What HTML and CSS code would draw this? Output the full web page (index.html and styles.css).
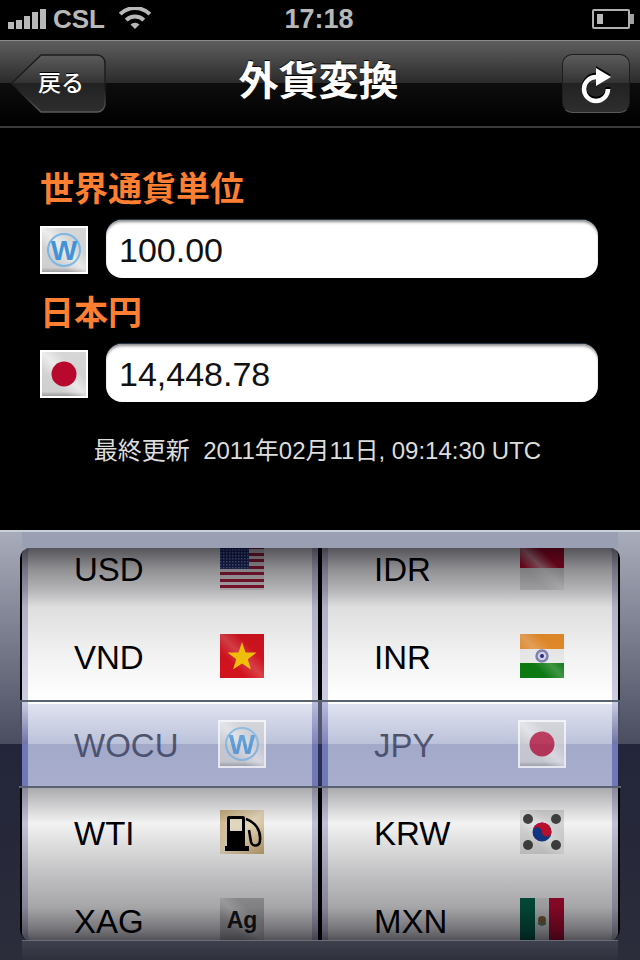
FILE: index.html
```html
<!DOCTYPE html>
<html lang="ja">

<head>
    <meta charset="UTF-8">
    <meta name="viewport" content="width=device-width, initial-scale=1.0">
    <title>外貨変換</title>
    <link rel="stylesheet" href="styles.css">
</head>

<body>
    <!-- flag icons, reused by the form and the picker -->
    <svg class="defs" aria-hidden="true">
        <defs>
            <linearGradient id="sheen" x1="0" y1="1" x2="1" y2="0">
                <stop offset="0.3" stop-color="#fff" stop-opacity="0" />
                <stop offset="0.5" stop-color="#fff" stop-opacity="0.55" />
                <stop offset="0.7" stop-color="#fff" stop-opacity="0" />
            </linearGradient>
            <linearGradient id="silver" x1="0" y1="0" x2="0" y2="1">
                <stop offset="0" stop-color="#d6d6d6" />
                <stop offset="0.9" stop-color="#cfcfcf" />
                <stop offset="1" stop-color="#9c9c9c" />
            </linearGradient>
            <linearGradient id="tan" x1="0" y1="0" x2="1" y2="1">
                <stop offset="0" stop-color="#d2b482" />
                <stop offset="0.5" stop-color="#f0e2c4" />
                <stop offset="1" stop-color="#c8a870" />
            </linearGradient>
            <pattern id="stars" width="3" height="3" patternUnits="userSpaceOnUse">
                <rect width="1.5" height="1.5" fill="#7a86b4" />
            </pattern>
        </defs>
        <symbol id="flag-wocu" viewBox="0 0 44 44">
            <rect width="44" height="44" fill="url(#silver)" />
            <rect width="44" height="44" fill="url(#sheen)" />
            <circle cx="22" cy="22" r="16" fill="none" stroke="#79b7e4" stroke-width="2" />
        </symbol>
        <symbol id="flag-jp" viewBox="0 0 44 44">
            <rect width="44" height="44" fill="url(#silver)" />
            <rect width="44" height="44" fill="url(#sheen)" />
            <circle cx="22" cy="22" r="12.5" fill="#b8082e" />
        </symbol>
        <symbol id="flag-us" viewBox="0 0 44 44">
            <rect width="44" height="44" fill="#e8e4e6" />
            <g fill="#a81c3c">
                <rect y="0" width="44" height="3" />
                <rect y="7" width="44" height="3" />
                <rect y="13" width="44" height="3" />
                <rect y="20" width="44" height="3" />
                <rect y="26" width="44" height="3" />
                <rect y="33" width="44" height="3" />
                <rect y="39" width="44" height="3" />
            </g>
            <rect width="29" height="23" fill="#1c2c6c" />
            <rect width="29" height="23" fill="url(#stars)" />
        </symbol>
        <symbol id="flag-vn" viewBox="0 0 44 44">
            <rect width="44" height="44" fill="#d8141f" />
            <rect width="44" height="44" fill="url(#sheen)" opacity="0.35" />
            <polygon points="22,8 25.6,18.4 36.5,18.6 27.8,25.2 31,35.6 22,29.4 13,35.6 16.2,25.2 7.5,18.6 18.4,18.4" fill="#fbc80a" />
        </symbol>
        <symbol id="flag-id" viewBox="0 0 44 44">
            <rect width="44" height="22" fill="#c00828" />
            <rect y="22" width="44" height="22" fill="#dedede" />
            <rect width="44" height="44" fill="url(#sheen)" />
        </symbol>
        <symbol id="flag-in" viewBox="0 0 44 44">
            <rect width="44" height="15" fill="#ef912c" />
            <rect y="15" width="44" height="14" fill="#f2f2f2" />
            <rect y="29" width="44" height="15" fill="#0c7d12" />
            <rect width="44" height="44" fill="url(#sheen)" opacity="0.4" />
            <circle cx="22" cy="22" r="5.5" fill="#dcdcf0" stroke="#8686bb" stroke-width="2.5" />
            <circle cx="22" cy="22" r="2" fill="#2c2c88" />
        </symbol>
        <symbol id="flag-fuel" viewBox="0 0 44 44">
            <rect width="44" height="44" fill="url(#tan)" />
            <rect x="7" y="6" width="18" height="32" rx="2" fill="#000" />
            <rect x="10" y="9" width="12" height="12" fill="#efe4cc" />
            <rect x="5" y="36" width="24" height="5" fill="#000" />
            <path d="M26 9 C35 12 41 20 40 30 C40 37 32 37 31 32 L29 20" fill="none" stroke="#000" stroke-width="2.6" />
        </symbol>
        <symbol id="flag-kr" viewBox="0 0 44 44">
            <rect width="44" height="44" fill="#dedede" />
            <rect width="44" height="44" fill="url(#sheen)" />
            <circle cx="22" cy="22" r="9.5" fill="#123a8c" />
            <path d="M12.5 22 A9.5 9.5 0 0 1 31.5 22 A4.75 4.75 0 0 1 22 22 A4.75 4.75 0 0 0 12.5 22 Z" fill="#c8102e" />
            <g fill="#444">
                <circle cx="8" cy="9" r="5" />
                <circle cx="36" cy="9" r="5" />
                <circle cx="8" cy="35" r="5" />
                <circle cx="36" cy="35" r="5" />
            </g>
        </symbol>
        <symbol id="flag-ag" viewBox="0 0 44 44">
            <rect width="44" height="44" fill="#c6c6c6" />
            <rect width="44" height="44" fill="url(#sheen)" />
        </symbol>
        <symbol id="flag-mx" viewBox="0 0 44 44">
            <rect width="15" height="44" fill="#04684c" />
            <rect x="15" width="14" height="44" fill="#ececec" />
            <rect x="29" width="15" height="44" fill="#c40c36" />
            <circle cx="22" cy="22" r="4" fill="#8a6a3c" />
            <path d="M18 25 Q22 29 26 25" fill="none" stroke="#3c8a5c" stroke-width="1.5" />
        </symbol>
    </svg>

    <div class="statusbar">
        <div class="status-left">
            <div class="signal">
                <span></span><span></span><span></span><span></span><span></span>
            </div>
            <span>CSL</span>
            <svg class="wifi" width="32" height="22" viewBox="0 0 32 22">
                <path d="M1.2 7.2 A21 21 0 0 1 30.8 7.2" fill="none" stroke="#b8b8b8" stroke-width="4" />
                <path d="M7.2 13.2 A12.5 12.5 0 0 1 24.8 13.2" fill="none" stroke="#b8b8b8" stroke-width="4" />
                <path d="M16 22 L11.5 17.5 A6.4 6.4 0 0 1 20.5 17.5 Z" fill="#b8b8b8" />
            </svg>
        </div>
        <div class="status-time">17:18</div>
        <div class="status-right">
            <div class="battery"><span></span></div>
        </div>
    </div>

    <header class="navbar">
        <a class="btn-back">
            <svg class="btn-shape" width="96" height="59" viewBox="0 0 96 59">
                <defs>
                    <linearGradient id="btnFill" x1="0" y1="0" x2="0" y2="1">
                        <stop offset="0" stop-color="#5c5c5c" />
                        <stop offset="0.5" stop-color="#323232" />
                        <stop offset="0.5" stop-color="#222" />
                        <stop offset="1" stop-color="#2e2e2e" />
                    </linearGradient>
                    <linearGradient id="btnLine" x1="0" y1="0" x2="0" y2="1">
                        <stop offset="0" stop-color="#1c1c1c" />
                        <stop offset="0.6" stop-color="#1c1c1c" />
                        <stop offset="1" stop-color="#5a5a5a" />
                    </linearGradient>
                </defs>
                <path d="M31 1 H87 A8 8 0 0 1 95 9 V50 A8 8 0 0 1 87 58 H31 L1.5 29.5 Z" fill="url(#btnFill)" stroke="url(#btnLine)" stroke-width="1.5" />
            </svg>
            <span class="btn-label">戻る</span>
        </a>
        <h1 class="nav-title">外貨変換</h1>
        <a class="btn-refresh">
            <svg class="refresh-icon" width="68" height="59" viewBox="0 0 68 59">
                <path d="M34 23 A12 12 0 1 0 46 35" fill="none" stroke="#fff" stroke-width="4.5" />
                <polygon points="34,14 49,23 34,32" fill="#fff" />
            </svg>
        </a>
    </header>

    <main class="converter">
        <h2 class="cur-label cur-first">世界通貨単位</h2>
        <div class="cur-row">
            <svg class="flag" viewBox="0 0 44 44"><use href="#flag-wocu" /><text x="22" y="32" class="flag-w">W</text></svg>
            <div class="cur-input">100.00</div>
        </div>
        <h2 class="cur-label">日本円</h2>
        <div class="cur-row">
            <svg class="flag"><use href="#flag-jp" /></svg>
            <div class="cur-input">14,448.78</div>
        </div>
        <p class="updated">最終更新  2011年02月11日, 09:14:30 UTC</p>
    </main>

    <section class="picker">
        <div class="picker-top"></div>
        <div class="wheels">
            <div class="wheel wheel-left">
                <div class="wheel-list">
                    <div class="wheel-row"><span class="code">USD</span><svg class="flag"><use href="#flag-us" /></svg></div>
                    <div class="wheel-row"><span class="code">VND</span><svg class="flag"><use href="#flag-vn" /></svg></div>
                    <div class="wheel-row selected"><span class="code">WOCU</span><svg class="flag" viewBox="0 0 44 44"><use href="#flag-wocu" /><text x="22" y="32" class="flag-w">W</text></svg></div>
                    <div class="wheel-row"><span class="code">WTI</span><svg class="flag"><use href="#flag-fuel" /></svg></div>
                    <div class="wheel-row"><span class="code">XAG</span><svg class="flag" viewBox="0 0 44 44"><use href="#flag-ag" /><text x="22" y="30" class="flag-ag">Ag</text></svg></div>
                </div>
            </div>
            <div class="wheel wheel-right">
                <div class="wheel-list">
                    <div class="wheel-row"><span class="code">IDR</span><svg class="flag"><use href="#flag-id" /></svg></div>
                    <div class="wheel-row"><span class="code">INR</span><svg class="flag"><use href="#flag-in" /></svg></div>
                    <div class="wheel-row selected"><span class="code">JPY</span><svg class="flag"><use href="#flag-jp" /></svg></div>
                    <div class="wheel-row"><span class="code">KRW</span><svg class="flag"><use href="#flag-kr" /></svg></div>
                    <div class="wheel-row"><span class="code">MXN</span><svg class="flag"><use href="#flag-mx" /></svg></div>
                </div>
            </div>
            <div class="wheel-shade"></div>
            <div class="selection">
                <div class="sel-half sel-top"></div>
                <div class="sel-half sel-bottom"></div>
            </div>
        </div>
        <div class="picker-bottom"></div>
    </section>
</body>

</html>
```

FILE: styles.css
```css
* {
    box-sizing: border-box;
}

body {
    font-family: "Liberation Sans", "Noto Sans CJK JP", sans-serif;
    margin: 0;
    width: 640px;
    height: 960px;
    overflow: hidden;
    background-color: #000;
}

.defs {
    position: absolute;
    width: 0;
    height: 0;
}

.flag-w {
    font-family: "Liberation Sans", sans-serif;
    font-size: 28px;
    font-weight: bold;
    fill: #3f93d8;
    text-anchor: middle;
}

.flag-ag {
    font-family: "Liberation Sans", sans-serif;
    font-size: 23px;
    font-weight: bold;
    fill: #1c1c1c;
    text-anchor: middle;
}

/* status bar */
.statusbar {
    display: grid;
    grid-template-columns: 1fr auto 1fr;
    align-items: center;
    height: 40px;
    padding: 0 10px 2px 8px;
    color: #b8b8b8;
    font-size: 26px;
    font-weight: bold;
}

.status-left {
    display: flex;
    align-items: center;
}

.status-left .wifi {
    margin-left: 14px;
    margin-top: -2px;
}

.signal {
    display: flex;
    align-items: flex-end;
    gap: 2px;
    height: 20px;
    margin-right: 7px;
}

.signal span {
    width: 6px;
    background-color: #b8b8b8;
}

.signal span:nth-child(1) { height: 7px; }
.signal span:nth-child(2) { height: 9px; }
.signal span:nth-child(3) { height: 13px; }
.signal span:nth-child(4) { height: 17px; }
.signal span:nth-child(5) { height: 20px; }

.status-time {
    font-size: 27px;
}

.status-right {
    display: flex;
    justify-content: flex-end;
}

.battery {
    position: relative;
    width: 38px;
    height: 20px;
    padding: 3px;
    border: 2px solid #b0b0b0;
    border-radius: 2px;
}

.battery span {
    display: block;
    width: 6px;
    height: 100%;
    background-color: #b8b8b8;
}

.battery::after {
    content: "";
    position: absolute;
    top: 3px;
    right: -6px;
    width: 4px;
    height: 10px;
    background-color: #a0a0a0;
}

/* nav bar */
.navbar {
    display: grid;
    grid-template-columns: 1fr auto 1fr;
    align-items: center;
    height: 88px;
    padding: 0 10px;
    border-top: 1px solid #8c8c8c;
    border-bottom: 2px solid #3a3a3a;
    background: linear-gradient(#5e5e5e 0, #2a2a2a 50%, #0d0d0d 50%, #000 100%);
}

.btn-back {
    position: relative;
    display: flex;
    align-items: center;
    width: 96px;
    height: 59px;
    padding-left: 28px;
    color: #fff;
}

.btn-shape {
    position: absolute;
    top: 0;
    left: 0;
}

.btn-label {
    position: relative;
    margin-bottom: 6px;
    font-size: 23px;
    font-weight: 500;
    text-shadow: 0 -1px 0 #000;
}

.nav-title {
    margin: 0 3px 6px 0;
    font-size: 40px;
    line-height: 44px;
    color: #fff;
    text-shadow: 0 -1px 0 #000;
}

.btn-refresh {
    display: block;
    justify-self: end;
    width: 68px;
    height: 59px;
    border: 1px solid #1c1c1c;
    border-bottom-color: #5a5a5a;
    border-radius: 10px;
    background: linear-gradient(#5c5c5c 0, #323232 50%, #222 50%, #2e2e2e 100%);
}

.refresh-icon {
    display: block;
    margin: -1px;
    filter: drop-shadow(0 -1.5px 0 #000);
}

/* converter form */
.converter {
    height: 402px;
    padding: 44px 42px 0 40px;
}

.cur-label {
    margin: 18px 0 14px;
    font-size: 34px;
    line-height: 34px;
    font-weight: bold;
    color: #ff7f32;
}

.cur-first {
    margin-top: 0;
}

.cur-row {
    display: flex;
    align-items: center;
    gap: 18px;
    height: 58px;
}

.flag {
    display: block;
    flex: none;
    width: 48px;
    height: 48px;
    border: 2px solid #fff;
}

.cur-row .flag {
    margin-top: 2px;
}

.cur-input {
    flex: 1;
    height: 58px;
    padding-left: 13px;
    font-size: 34px;
    line-height: 60px;
    color: #111;
    background-color: #fff;
    border-radius: 16px;
    box-shadow: inset 0 3px 3px -1px #8a8a8a, 0 -1px 1px #2c3a4c;
}

.updated {
    margin: 35px 0 0 -3px;
    text-align: center;
    font-size: 24px;
    line-height: 28px;
    color: #ddd;
    white-space: pre;
}

/* currency picker */
.picker {
    height: 430px;
    padding: 0 20px;
    border-top: 2px solid #ccd0d8;
    background: linear-gradient(#a8acba 0, #4a4d60 212px, #23253a 212px, #2b2d3b 100%);
}

.picker-top {
    height: 16px;
    margin: 0 2px;
    background-color: #9a9fb3;
}

.picker-bottom {
    height: 20px;
    margin: 0 2px;
    border-top: 1px solid #6a6c78;
    background: linear-gradient(#3e404e, #2e303c);
}

.wheels {
    position: relative;
    display: flex;
    gap: 4px;
    height: 392px;
    border-left: 2px solid #000;
    border-right: 2px solid #000;
    border-radius: 10px;
    background-color: #000;
}

.wheel {
    flex: 1;
    overflow: hidden;
    background-color: #fff;
    border-left: 6px solid rgba(70, 70, 150, 0.28);
    border-right: 6px solid rgba(70, 70, 150, 0.28);
    background-clip: border-box;
}

.wheel-left {
    border-radius: 8px 0 0 8px;
}

.wheel-right {
    border-radius: 0 8px 8px 0;
}

.wheel-list {
    margin-top: -23px;
}

.wheel-row {
    display: flex;
    align-items: center;
    height: 88px;
    padding-left: 46px;
}

.wheel-row .flag {
    margin-top: -2px;
    border-color: rgba(255, 255, 255, 0.6);
}

/* the chosen flags sit over the blue bar, only slightly tinted */
.wheel-row.selected .flag {
    position: relative;
    z-index: 2;
    border-color: #fff;
    opacity: 0.72;
}

.code {
    width: 144px;
    padding-top: 2px;
    font-size: 33px;
    color: #000;
}

.wheel-shade {
    position: absolute;
    top: 0;
    left: 0;
    right: 0;
    bottom: 0;
    border-radius: 8px;
    background: linear-gradient(
        rgba(0, 0, 8, 0.67) 0,
        rgba(0, 0, 8, 0.43) 22px,
        rgba(0, 0, 8, 0.29) 42px,
        rgba(0, 0, 8, 0.13) 59px,
        rgba(0, 0, 8, 0.055) 105px,
        rgba(0, 0, 8, 0) 152px,
        rgba(0, 0, 8, 0) 240px,
        rgba(0, 0, 8, 0.33) 240px,
        rgba(0, 0, 8, 0.05) 275px,
        rgba(0, 0, 8, 0.24) 325px,
        rgba(0, 0, 8, 0.35) 359px,
        rgba(0, 0, 8, 0.55) 382px,
        rgba(0, 0, 8, 0.68) 392px
    );
}

.selection {
    position: absolute;
    top: 152px;
    left: -3px;
    right: -3px;
    z-index: 1;
    height: 88px;
    padding: 0 1px;
    border-top: 2px solid #586272;
    border-bottom: 2px solid #586272;
}

.sel-half {
    height: 42px;
    border-left: 2px solid;
    border-right: 2px solid;
    background-repeat: no-repeat;
    background-size: 6px 100%, 6px 100%, 4px 100%, 6px 100%, 6px 100%, 100% 100%;
    background-position: 0 0, 290px 0, 296px 0, 300px 0, 590px 0, 0 0;
}

.sel-top {
    border-color: #4c5062;
    background-image:
        linear-gradient(#c8cce0, #7074a6),
        linear-gradient(#b8bcdc, #8084bc),
        linear-gradient(#585b70, #50536a),
        linear-gradient(#b8bcdc, #8084bc),
        linear-gradient(#c8cce0, #7074a6),
        linear-gradient(rgba(255, 255, 255, 0.9) 0, rgba(255, 255, 255, 0.9) 2px, rgba(150, 160, 206, 0.3) 2px, rgba(143, 153, 193, 0.6) 100%);
}

.sel-bottom {
    border-color: #23263a;
    background-image:
        linear-gradient(#7078b8, #7078b8),
        linear-gradient(#7078b8, #7078b8),
        linear-gradient(#2a2c50, #2a2c50),
        linear-gradient(#7078b8, #7078b8),
        linear-gradient(#7078b8, #7078b8),
        linear-gradient(rgba(114, 123, 171, 0.65), rgba(122, 130, 178, 0.65));
}
```
